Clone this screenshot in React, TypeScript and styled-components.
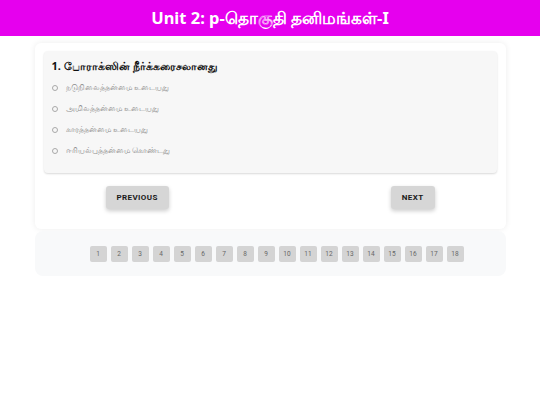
import React from "react"
import styled, { createGlobalStyle } from "styled-components"

const GlobalStyle = createGlobalStyle`
  body {
    margin: 0;
    background: #ffffff;
    font-family: Roboto, "Noto Sans", sans-serif;
  }
`

const options = [
  "நடுநிலைத்தன்மை உடையது",
  "அமிலத்தன்மை உடையது",
  "காரத்தன்மை உடையது",
  "ஈரியல்புத்தன்மை கொண்டது",
]

const pages = Array.from({ length: 18 }, (_, i) => i + 1)

const App: React.FC = () => {
  return (
    <>
      <GlobalStyle />
      <Header>Unit 2: p-தொகுதி தனிமங்கள்-I</Header>
      <Main>
        <Card>
          <QuestionBox>
            <QuestionTitle>1. போராக்ஸின் நீர்க்கரைசலானது</QuestionTitle>
            {options.map(o => (
              <Option key={o}>
                <Radio />
                <span>{o}</span>
              </Option>
            ))}
          </QuestionBox>
          <NavRow>
            <NavButton>Previous</NavButton>
            <NavButton>Next</NavButton>
          </NavRow>
        </Card>
        <Pager>
          {pages.map(p => (
            <PageButton key={p}>{p}</PageButton>
          ))}
        </Pager>
      </Main>
    </>
  )
}

export default App

const Header = styled.header`
  height: 36px;
  background: #e600ee;
  color: #ffffff;
  display: flex;
  align-items: center;
  justify-content: center;
  font-family: "Noto Sans", sans-serif;
  font-weight: 700;
  font-size: 16.5px;
`

const Main = styled.main`
  width: 471px;
  margin: 0 auto;
  padding-top: 7px;
`

const Card = styled.section`
  background: #ffffff;
  border-radius: 6px;
  box-shadow: 0 0 6px rgba(0, 0, 0, 0.08);
  padding: 8px 9px 20px;
`

const QuestionBox = styled.div`
  background: #f7f7f7;
  border-radius: 4px;
  box-shadow: 0 1px 2px rgba(0, 0, 0, 0.15);
  padding: 6px 8px 12px;
  display: flex;
  flex-direction: column;
`

const QuestionTitle = styled.h3`
  margin: 0 0 2px;
  font-family: "Noto Sans", sans-serif;
  font-size: 11px;
  font-weight: 700;
  color: #111111;
  line-height: 18px;
`

const Option = styled.label`
  display: flex;
  align-items: center;
  gap: 8px;
  height: 21px;
  font-family: "Noto Sans", sans-serif;
  font-size: 7.8px;
  color: #8c8c8c;
`

const Radio = styled.span`
  width: 4px;
  height: 4px;
  border: 1px solid #a9a9a9;
  border-radius: 50%;
  flex: none;
`

const NavRow = styled.div`
  display: flex;
  justify-content: space-between;
  padding: 13px 62px 0 62px;
`

const NavButton = styled.button`
  height: 23px;
  padding: 0 11px;
  border: none;
  border-radius: 3px;
  background: #d6d6d6;
  box-shadow: 0 2px 4px rgba(0, 0, 0, 0.2);
  font-family: Roboto, sans-serif;
  font-size: 8px;
  font-weight: 700;
  letter-spacing: 0.4px;
  text-transform: uppercase;
  color: #1a1a1a;
`

const Pager = styled.nav`
  margin-top: 2px;
  background: #f8f9fa;
  border-radius: 8px;
  height: 45px;
  padding-left: 13px;
  display: flex;
  align-items: center;
  justify-content: center;
  gap: 4px;
`

const PageButton = styled.button`
  width: 17px;
  height: 16px;
  padding: 0;
  border: none;
  border-radius: 2px;
  background: #d4d4d4;
  font-family: Roboto, sans-serif;
  font-size: 6.5px;
  color: #666666;
`
